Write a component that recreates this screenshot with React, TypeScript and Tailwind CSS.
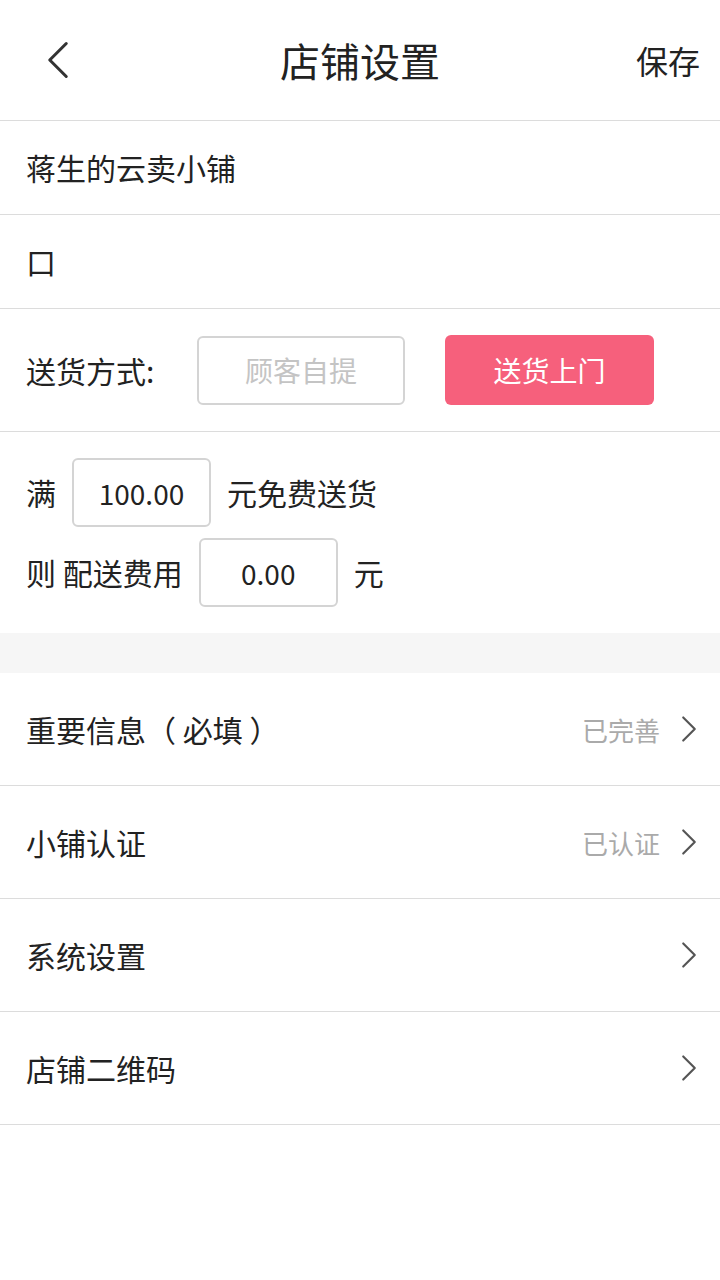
import * as React from "react";

const font = { fontFamily: '"Noto Sans CJK SC", "Noto Sans", sans-serif' };

function Chevron({ dir = "right", className = "" }: { dir?: "left" | "right"; className?: string }) {
  return (
    <svg viewBox="0 0 20 34" className={className} fill="none" stroke="currentColor" strokeWidth={2.6} strokeLinecap="round" strokeLinejoin="round">
      {dir === "right" ? <path d="M3 3 L17 17 L3 31" /> : <path d="M17 3 L3 17 L17 31" />}
    </svg>
  );
}

const menu = [
  { label: "重要信息（ 必填 ）", status: "已完善" },
  { label: "小铺认证", status: "已认证" },
  { label: "系统设置", status: "" },
  { label: "店铺二维码", status: "" },
];

export default function App() {
  return (
    <div className="min-h-[1280px] w-[720px] bg-white text-[#222]" style={font}>
      <header className="grid h-[121px] grid-cols-[1fr_auto_1fr] items-center border-b border-[#dcdcdc] px-[20px]">
        <div className="flex items-center pl-[26px]">
          <Chevron dir="left" className="h-[40px] w-[24px] text-[#333]" />
        </div>
        <h1 className="text-[40px] font-normal">店铺设置</h1>
        <div className="flex justify-end text-[32px]">保存</div>
      </header>

      <div className="flex h-[94px] items-center border-b border-[#dcdcdc] px-[26px] text-[30px]">蒋生的云卖小铺</div>
      <div className="flex h-[94px] items-center border-b border-[#dcdcdc] px-[26px] text-[30px]">口</div>

      <div className="flex h-[123px] items-center border-b border-[#dcdcdc] px-[26px] text-[30px]">
        <span className="w-[171px]">送货方式:</span>
        <button className="flex h-[69px] w-[208px] items-center justify-center rounded-[6px] border-2 border-[#d4d4d4] text-[28px] text-[#c4c4c4]">
          顾客自提
        </button>
        <button className="ml-[40px] flex h-[70px] w-[209px] items-center justify-center rounded-[6px] bg-[#f6607c] text-[28px] text-white">
          送货上门
        </button>
      </div>

      <div className="flex h-[201px] flex-col gap-[11px] px-[26px] pt-[26px] text-[30px]">
        <div className="flex items-center">
          <span>满</span>
          <div className="ml-[16px] flex h-[69px] w-[139px] items-center justify-center rounded-[6px] border-2 border-[#d4d4d4] text-[28px]">100.00</div>
          <span className="ml-[16px]">元免费送货</span>
        </div>
        <div className="flex items-center">
          <span>则 配送费用</span>
          <div className="ml-[16px] flex h-[69px] w-[139px] items-center justify-center rounded-[6px] border-2 border-[#d4d4d4] text-[28px]">0.00</div>
          <span className="ml-[16px]">元</span>
        </div>
      </div>

      <div className="h-[40px] bg-[#f6f6f6]" />

      {menu.map((m) => (
        <div key={m.label} className="flex h-[113px] items-center border-b border-[#dcdcdc] pl-[26px] pr-[22px]">
          <span className="flex-1 text-[30px]">{m.label}</span>
          {m.status && <span className="mr-[20px] text-[26px] text-[#aaaaaa]">{m.status}</span>}
          <Chevron className="h-[28px] w-[18px] text-[#555]" />
        </div>
      ))}
    </div>
  );
}
